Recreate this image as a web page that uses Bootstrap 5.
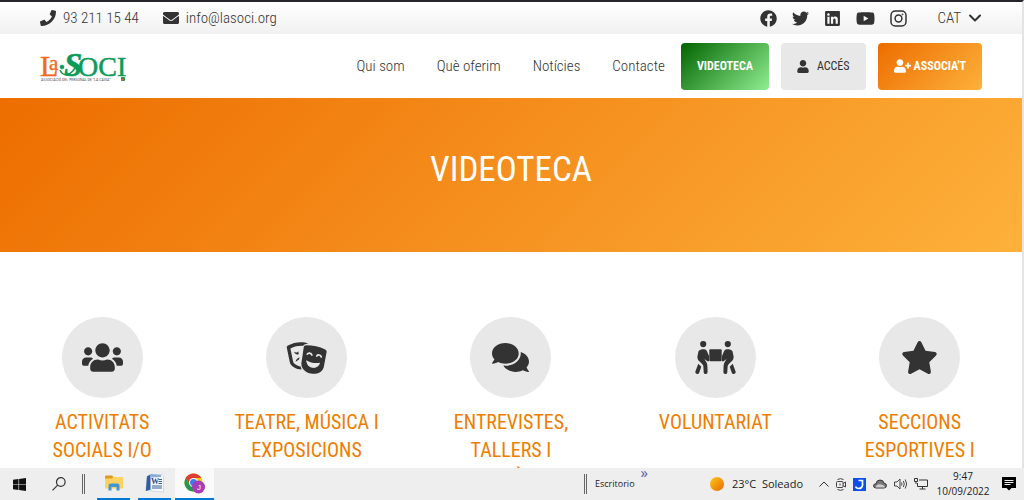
<!DOCTYPE html>
<html lang="ca">
<head>
<meta charset="utf-8">
<meta name="viewport" content="width=device-width, initial-scale=1">
<title>Videoteca - LaSoci</title>
<link href="https://cdn.jsdelivr.net/npm/bootstrap@5.3.0/dist/css/bootstrap.min.css" rel="stylesheet">
<style>
  body { font-family: "Liberation Sans Narrow", "Roboto Condensed", "Liberation Sans", sans-serif; color: #333; background: #fff; }
  svg { display: block; fill: currentColor; flex: none; }
  a { color: inherit; text-decoration: none; }
  .site { border-top: 2px solid #25262b; border-right: 2px solid #e4e4e6; min-height: 0; }
  .site-pad { padding-left: 40px; padding-right: 40px; }
  .topbar { height: 32px; background: linear-gradient(#fff, #f1f1f1); }
  .mainbar { height: 64px; }
  .topbar, .mainbar .nav-link { font-size: 15px; line-height: 24px; font-weight: 300; color: #333; }
  .contact { gap: 7px; }
  .social { gap: 15px; margin-right: 30px; }
  .mainbar .nav-link { padding: 0 16px; }
  .mainbar .btn { height: 47px; border: 0; border-radius: 4px; padding: 0 16px; font-size: 12px; color: #333; gap: 8px; }
  .mainbar .btn-video { background: linear-gradient(135deg, #006400, #90ee90); color: #fff; font-weight: bold; }
  .mainbar .btn-access { background: #e8e8e8; }
  .mainbar .btn-join, .hero { background: linear-gradient(135deg, #ed6d00, #fdb13b); color: #fff; }
  .mainbar .btn-join { font-weight: bold; gap: 3px; }
  .hero { height: 154px; padding-bottom: 10px; }
  .hero h1 { font-size: 35px; line-height: 42px; font-weight: 400; }
  .topics { padding-top: 65px; }
  .topics a { color: #f07d00; }
  .topic-icon { width: 81px; height: 81px; background: #e8e8e8; color: #333; margin-bottom: 10px; }
  .topics h2 { font-size: 20px; line-height: 28px; font-weight: 400; padding: 0 28px; }
  .taskbar { height: 32px; background: #eee; font-family: "Open Sans", "Noto Sans", sans-serif; font-size: 11px; line-height: 14px; color: #222; }
  .taskbar button { border: 0; background: none; padding: 0; height: 32px; color: #111; }
  .slot { width: 39px; }
  .app { border-bottom: 2px solid #0078d7 !important; width: 33px; margin: 0 4px; }
  .taskbar .app-current { width: 39px; margin: 0; background: #fafafa; }
  .bars { width: 3px; height: 20px; border: solid #666; border-width: 0 1px; }
  .desk { font-size: 9px; }
  .more { font-size: 15px; color: #5a5aa8; align-self: flex-start; margin: -3px 62px 0 6px; }
  .tray { gap: 7px; }
  .clock { font-size: 10px; line-height: 15px; width: 54px; }
  .notices { margin: 0 8px 0 12px; }
</style>
</head>
<body class="vh-100 d-flex flex-column overflow-hidden">
<div class="site flex-fill overflow-hidden">
  <div class="topbar site-pad d-flex align-items-center">
    <a href="tel:932111544" class="contact d-flex align-items-center">
      <svg width="16" height="16" viewBox="0 0 512 512"><path d="M493.4 24.6l-104-24c-11.3-2.6-22.9 3.3-27.5 13.9l-48 112c-4.2 9.8-1.4 21.3 6.9 28l60.6 49.6c-36 76.7-98.9 140.5-177.2 177.2l-49.6-60.6c-6.8-8.3-18.2-11.1-28-6.9l-112 48C3.9 366.5-2 378.1.6 389.4l24 104C27.1 504.2 36.7 512 48 512c256.1 0 464-207.5 464-464 0-11.2-7.7-20.9-18.6-23.4z"/></svg>93 211 15 44</a>
    <a href="mailto:info@lasoci.org" class="contact d-flex align-items-center ms-4">
      <svg width="16" height="16" viewBox="0 0 512 512"><path d="M502.3 190.8c3.9-3.1 9.7-.2 9.7 4.7V400c0 26.5-21.5 48-48 48H48c-26.5 0-48-21.5-48-48V195.6c0-5 5.7-7.8 9.7-4.7 22.4 17.4 52.1 39.5 154.1 113.6 21.1 15.4 56.7 47.8 92.2 47.6 35.7.3 72-32.8 92.3-47.6 102-74.1 131.6-96.3 154-113.7zM256 320c23.2.4 56.6-29.2 73.4-41.4 132.7-96.3 142.8-104.7 173.4-128.7 5.8-4.5 9.2-11.5 9.2-18.9v-19c0-26.5-21.5-48-48-48H48c-26.5 0-48 21.5-48 48v19c0 7.4 3.4 14.3 9.2 18.9 30.6 23.9 40.7 32.4 173.4 128.7 16.8 12.2 50.2 41.8 73.4 41.4z"/></svg>info@lasoci.org</a>
    <div class="social d-flex align-items-center ms-auto">
      <a href="#" aria-label="Facebook"><svg width="17" height="17" viewBox="0 0 512 512"><path d="M504 256C504 119 393 8 256 8S8 119 8 256c0 123.78 90.69 226.38 209.25 245V327.69h-63V256h63v-54.64c0-62.15 37-96.48 93.67-96.48 27.14 0 55.52 4.84 55.52 4.84v61h-31.28c-30.8 0-40.41 19.12-40.41 38.73V256h68.78l-11 71.69h-57.78V501C413.31 482.38 504 379.78 504 256z"/></svg></a>
      <a href="#" aria-label="Twitter"><svg width="17" height="17" viewBox="0 0 512 512"><path d="M459.37 151.716c.325 4.548.325 9.097.325 13.645 0 138.72-105.583 298.558-298.558 298.558-59.452 0-114.68-17.219-161.137-47.106 8.447.974 16.568 1.299 25.34 1.299 49.055 0 94.213-16.568 130.274-44.832-46.132-.975-84.792-31.188-98.112-72.772 6.498.974 12.995 1.624 19.818 1.624 9.421 0 18.843-1.3 27.614-3.573-48.081-9.747-84.143-51.98-84.143-102.985v-1.299c13.969 7.797 30.214 12.67 47.431 13.319-28.264-18.843-46.781-51.005-46.781-87.391 0-19.492 5.197-37.36 14.294-52.954 51.655 63.675 129.3 105.258 216.365 109.807-1.624-7.797-2.599-15.918-2.599-24.04 0-57.828 46.782-104.934 104.934-104.934 30.213 0 57.502 12.67 76.67 33.137 23.715-4.548 46.456-13.32 66.599-25.34-7.798 24.366-24.366 44.833-46.132 57.827 21.117-2.273 41.584-8.122 60.426-16.243-14.292 20.791-32.161 39.308-52.628 54.253z"/></svg></a>
      <a href="#" aria-label="LinkedIn"><svg width="17" height="17" viewBox="-32 0 512 512"><path d="M416 32H31.9C14.3 32 0 46.5 0 64.3v383.4C0 465.5 14.3 480 31.9 480H416c17.6 0 32-14.5 32-32.3V64.3c0-17.8-14.4-32.3-32-32.3zM135.4 416H69V202.2h66.5V416zm-33.2-243c-21.3 0-38.5-17.3-38.5-38.5S80.9 96 102.2 96c21.2 0 38.5 17.3 38.5 38.5 0 21.3-17.2 38.5-38.5 38.5zm282.1 243h-66.4V312c0-24.8-.5-56.7-34.5-56.7-34.6 0-39.9 27-39.9 54.9V416h-66.4V202.2h63.7v29.2h.9c8.9-16.8 30.6-34.5 62.9-34.5 67.2 0 79.7 44.3 79.7 101.9V416z"/></svg></a>
      <a href="#" aria-label="YouTube"><svg width="19" height="17" viewBox="0 0 576 512"><path d="M549.655 124.083c-6.281-23.65-24.787-42.276-48.284-48.597C458.781 64 288 64 288 64S117.22 64 74.629 75.486c-23.497 6.322-42.003 24.947-48.284 48.597-11.412 42.867-11.412 132.305-11.412 132.305s0 89.438 11.412 132.305c6.281 23.65 24.787 41.5 48.284 47.821C117.22 448 288 448 288 448s170.78 0 213.371-11.486c23.497-6.321 42.003-24.171 48.284-47.821 11.412-42.867 11.412-132.305 11.412-132.305s0-89.438-11.412-132.305zm-317.51 213.508V175.185l142.739 81.205-142.739 81.201z"/></svg></a>
      <a href="#" aria-label="Instagram"><svg width="17" height="17" viewBox="0 0 17 17" stroke="currentColor" stroke-width="1.5" style="fill:none"><rect x="1" y="1" width="15" height="15" rx="4.3"/><circle cx="8.5" cy="8.5" r="3.4"/><circle cx="12.6" cy="4.4" r=".5" stroke-width="1"/></svg></a>
    </div>
    <a href="#" class="contact d-flex align-items-center">CAT
      <svg width="14" height="14" viewBox="0 0 14 14" style="fill:none" stroke="currentColor" stroke-width="2" stroke-linecap="round" stroke-linejoin="round"><path d="M2 4.5l5 5 5-5"/></svg></a>
  </div>

  <nav class="mainbar site-pad d-flex align-items-center">
    <a href="#" class="me-auto" aria-label="LaSoci">
      <svg width="86" height="34" viewBox="0 0 86 34" font-family="Liberation Serif, serif">
        <g fill="#f26a21" stroke="#f26a21" stroke-width=".4"><text x="0" y="27" font-size="30">L</text><text x="9" y="21" font-size="21">a</text></g>
        <g fill="#0d9b59" stroke="#0d9b59" stroke-width=".5"><text x="24" y="27" font-size="33" font-style="italic" font-weight="bold">S</text><text x="38" y="27" font-size="28">OCI</text><circle cx="22" cy="18" r="2"/></g>
        <path d="M20 21c3 7 10 6 15-2" fill="none" stroke="#0d9b59" stroke-width="1.5"/>
        <text x="1" y="32" font-family="Liberation Sans Narrow, Roboto Condensed, sans-serif" font-size="4" fill="#555">ASSOCIACIÓ DEL PERSONAL DE “LA CAIXA”</text>
        <rect x="81" y="28" width="4" height="4" rx="1" fill="#0d9b59"/><circle cx="82.500" cy="30.500" r="1" fill="#f26a21"/>
      </svg></a>
    <a class="nav-link" href="#">Qui som</a>
    <a class="nav-link" href="#">Què oferim</a>
    <a class="nav-link" href="#">Notícies</a>
    <a class="nav-link" href="#">Contacte</a>
    <div class="d-flex" style="gap:12px">
      <button type="button" class="btn btn-video">VIDEOTECA</button>
      <button type="button" class="btn btn-access d-flex align-items-center"><svg width="12" height="13" viewBox="0 0 448 512"><path d="M224 256c70.7 0 128-57.3 128-128S294.7 0 224 0 96 57.3 96 128s57.3 128 128 128zm89.6 32h-16.7c-22.2 10.2-46.9 16-72.9 16s-50.6-5.8-72.9-16h-16.7C60.2 288 0 348.2 0 422.4V464c0 26.5 21.5 48 48 48h352c26.5 0 48-21.5 48-48v-41.6c0-74.2-60.2-134.4-134.4-134.4z"/></svg>ACCÉS</button>
      <button type="button" class="btn btn-join d-flex align-items-center"><svg width="17" height="14" viewBox="0 0 640 512"><path d="M224 256c70.7 0 128-57.3 128-128S294.7 0 224 0 96 57.3 96 128s57.3 128 128 128zm89.6 32h-16.7c-22.2 10.2-46.9 16-72.9 16s-50.6-5.8-72.9-16h-16.7C60.2 288 0 348.2 0 422.4V464c0 26.5 21.5 48 48 48h352c26.5 0 48-21.5 48-48v-41.6c0-74.2-60.2-134.4-134.4-134.4z"/><path d="M624 208h-64v-64c0-8.8-7.2-16-16-16h-32c-8.8 0-16 7.2-16 16v64h-64c-8.8 0-16 7.2-16 16v32c0 8.8 7.2 16 16 16h64v64c0 8.8 7.2 16 16 16h32c8.8 0 16-7.2 16-16v-64h64c8.8 0 16-7.2 16-16v-32c0-8.8-7.2-16-16-16z"/></svg>ASSOCIA'T</button>
    </div>
  </nav>

  <header class="hero d-flex align-items-center justify-content-center"><h1 class="m-0">VIDEOTECA</h1></header>

  <main class="topics row row-cols-5 g-0 text-center">
    <a href="#" class="col">
      <div class="topic-icon rounded-circle d-flex align-items-center justify-content-center mx-auto"><svg width="41" height="33" viewBox="0 0 640 512"><path d="M96 224c35.3 0 64-28.7 64-64s-28.7-64-64-64-64 28.7-64 64 28.7 64 64 64zm448 0c35.3 0 64-28.7 64-64s-28.7-64-64-64-64 28.7-64 64 28.7 64 64 64zm32 32h-64c-17.6 0-33.5 7.1-45.1 18.6 40.3 22.1 68.9 62 75.1 109.4h66c17.7 0 32-14.3 32-32v-32c0-35.3-28.7-64-64-64zm-256 0c61.9 0 112-50.1 112-112S381.9 32 320 32 208 82.1 208 144s50.1 112 112 112zm76.8 32h-8.3c-20.8 10-43.9 16-68.5 16s-47.6-6-68.5-16h-8.3C179.6 288 128 339.6 128 403.2V432c0 26.5 21.5 48 48 48h288c26.5 0 48-21.5 48-48v-28.8c0-63.6-51.6-115.2-115.2-115.2zm-223.7-13.4C161.5 263.1 145.6 256 128 256H64c-35.3 0-64 28.7-64 64v32c0 17.7 14.3 32 32 32h65.9c6.3-47.4 34.9-87.3 75.2-109.4z"/></svg></div>
      <h2>ACTIVITATS SOCIALS I/O</h2></a>
    <a href="#" class="col">
      <div class="topic-icon rounded-circle d-flex align-items-center justify-content-center mx-auto"><svg width="41" height="33" viewBox="0 0 41 33">
        <path d="M22.5 2.600C17 .2 8.500.7 1.900 4.500c-.9.5-1.300 1.300-1.100 2.300l3 14.500c.8 4 6.300 7.200 11.800 7.300l-1-3.200c-3.500-.5-7-2.600-7.500-4.900L4.400 7.400c4.300-2 8.200-2.700 12.600-2.500 1.200-1.500 3-2.200 5.500-2.300z"/>
        <path d="M8 10.800c2 1 3.600.8 4.400-.6l.3 3c-1.800.8-3.700 0-4.700-2.400zM9.600 20.800c.3-2.300 1.800-3.800 4-4.600l-.6 2.300z"/>
        <path d="M17.700 6.400c.2-1.300 1.200-2.100 2.500-2.100 6.700.1 13.200 1.300 19 4.100 1.100.5 1.600 1.500 1.400 2.700l-2.800 14.800c-1.200 5.200-7.200 7.700-12.700 6.700-5.400-1-10-4.700-9.700-10.400z"/>
        <g fill="none" stroke="#e8e8e8" stroke-width="1.700" stroke-linecap="round"><path d="M21.300 13.200c.9-1.700 3.700-1.500 4.600.8M30.800 15c1-1.700 3.800-1.300 4.500.9"/></g>
        <path d="M20.200 19.200c4.500 2.700 9 3.400 13.900 2.600-1 3.800-4.100 5.500-7.500 5-3.700-.6-6.200-3.400-6.400-7.600z" fill="#e8e8e8"/></svg></div>
      <h2>TEATRE, MÚSICA I EXPOSICIONS</h2></a>
    <a href="#" class="col">
      <div class="topic-icon rounded-circle d-flex align-items-center justify-content-center mx-auto"><svg width="37" height="33" viewBox="0 0 576 512"><path d="M416 192c0-88.4-93.1-160-208-160S0 103.6 0 192c0 34.3 14.1 65.9 38 92-13.4 30.2-35.5 54.2-35.8 54.5-2.2 2.3-2.8 5.7-1.5 8.7S4.8 352 8 352c36.6 0 66.9-12.3 88.7-25 32.2 15.7 70.3 25 111.3 25 114.9 0 208-71.6 208-160zm122 220c23.900-26 38-57.700 38-92 0-66.900-53.500-124.200-129.300-148.100.9 6.600 1.300 13.300 1.300 20.100 0 105.900-107.700 192-240 192-10.800 0-21.300-.8-31.700-1.900C207.800 439.600 281.800 480 368 480c41 0 79.100-9.200 111.300-25 21.800 12.700 52.100 25 88.700 25 3.200 0 6.100-1.900 7.300-4.800 1.300-2.900.7-6.300-1.500-8.700-.3-.3-22.400-24.200-35.800-54.500z"/></svg></div>
      <h2>ENTREVISTES, TALLERS I CONFERÈNCIES</h2></a>
    <a href="#" class="col">
      <div class="topic-icon rounded-circle d-flex align-items-center justify-content-center mx-auto"><svg width="41" height="33" viewBox="0 0 41 33">
        <rect x="14.3" y="8.3" width="12.4" height="12" rx="1"/>
        <g id="carrier"><circle cx="8.2" cy="3.1" r="3.1"/>
        <path d="M3.5 10.300C5 8.300 7 8 9.200 8.200c1.600.2 2.400 1 3 2.600l1.800 4.300v5.200h-1.500L9.400 18l1.400 2.300c1.200 1.900 1.500 3 1.600 5l.2 5.700c0 2.600-3.700 2.700-3.900.2l-.3-5.200c0-1.400-.5-2.200-1.500-3.200l-2.800-2.900C2.700 18.500 2.200 17.300 2.500 15z"/>
        <path d="M3.300 22.700l3 3-2.100 6c-.9 2.200-4.500 1.200-3.800-1.300z"/></g>
        <use href="#carrier" transform="matrix(-1 0 0 1 41 0)"/></svg></div>
      <h2>VOLUNTARIAT</h2></a>
    <a href="#" class="col">
      <div class="topic-icon rounded-circle d-flex align-items-center justify-content-center mx-auto"><svg width="37" height="33" viewBox="0 0 576 512"><path d="M259.3 17.800L194 150.200 47.900 171.500c-26.200 3.800-36.700 36.100-17.700 54.600l105.700 103-25 145.500c-4.500 26.300 23.200 46 46.400 33.700L288 439.600l130.700 68.700c23.200 12.200 50.900-7.400 46.400-33.700l-25-145.500 105.700-103c19-18.500 8.500-50.800-17.700-54.600L382 150.200 316.700 17.800c-11.700-23.600-45.600-23.900-57.400 0z"/></svg></div>
      <h2>SECCIONS ESPORTIVES I CULTURALS</h2></a>
  </main>
</div>

<footer class="taskbar d-flex align-items-center flex-shrink-0">
  <button type="button" class="slot d-flex align-items-center justify-content-center" aria-label="Inicio"><svg width="13" height="13" viewBox="0 0 13 13"><path d="M0 1.800L5.500 1v5.200H0zM6.100.9L13 0v6.200H6.100zM0 6.800h5.500V12L0 11.200zM6.100 6.800H13V13l-6.900-.9z"/></svg></button>
  <button type="button" class="slot d-flex align-items-center justify-content-center" aria-label="Buscar"><svg width="14" height="14" viewBox="0 0 14 14" style="fill:none" stroke="#333" stroke-width="1.200"><circle cx="8.800" cy="5" r="4.300"/><path d="M5.700 8.200L.5 13.400"/></svg></button>
  <span class="bars ms-1 me-2"></span>
  <button type="button" class="app ms-1 d-flex align-items-center justify-content-center" aria-label="Explorador"><svg width="18" height="16" viewBox="0 0 18 16"><path d="M0 1.500Q0 .5 1 .5h6L8.500 2v2H0z" fill="#dc9a16"/><path d="M8 2h9q1 0 1 1v10.500H0v-10h7z" fill="#fdd262"/><path d="M3.500 15.500v-5q0-2 2-2h7q2 0 2 2v5h-3V12h-5v3.500z" fill="#3f97d8"/></svg></button>
  <button type="button" class="app d-flex align-items-center justify-content-center" aria-label="Word"><svg width="19" height="19" viewBox="0 0 19 19"><path d="M5 .5h12l1.500 1.500v16L6 17z" fill="#f8fafd" stroke="#b8c8de" stroke-width=".6"/><path d="M2 2l4-2 10 1v2L6 3.500V16L.5 17z" fill="#8bacd6"/><path d="M2 2.500L5 1v14.500L1 17z" fill="#315d9f"/><text x="6" y="10" font-family="Liberation Serif, serif" font-weight="bold" font-size="8" fill="#244b8c">W</text><path d="M13.500 5.500H17M13.500 7.500H17M13.500 9.500H17M7 12h10M7 14h10" stroke="#315d9f"/></svg></button>
  <button type="button" class="app app-current d-flex align-items-center justify-content-center" aria-label="Chrome"><svg width="21" height="21" viewBox="0 0 21 21"><circle cx="9.500" cy="9.500" r="9" fill="#fbc116"/><path d="M1.700 5A9 9 0 0 1 17.300 5H9.500L5.600 11.800z" fill="#df3b2f"/><path d="M1.700 5A9 9 0 0 0 9.500 18.500L13.400 11.700H5.600z" fill="#229a4c"/><circle cx="9.500" cy="9.500" r="4.500" fill="#fff"/><circle cx="9.500" cy="9.500" r="3.500" fill="#3b7ded"/><circle cx="14.500" cy="14" r="6.500" fill="#a83cb5"/><text x="13" y="17" font-family="Liberation Sans, sans-serif" font-size="8" fill="#fff">J</text></svg></button>

  <span class="bars ms-auto me-2"></span><span class="desk">Escritorio</span><span class="more">»</span>
  <svg width="14" height="14" viewBox="0 0 14 14"><defs><linearGradient id="sun" x1="0" y1="0" x2="1" y2="1"><stop stop-color="#ffc91a"/><stop offset="1" stop-color="#e96805"/></linearGradient></defs><circle cx="7" cy="7" r="7" fill="url(#sun)"/></svg>
  <span class="ms-2">23°C&nbsp; Soleado</span>
  <div class="tray d-flex align-items-center ms-3">
    <svg width="10" height="6" viewBox="0 0 10 6" style="fill:none" stroke="#333"><path d="M.5 5.500L5 1l4.500 4.500"/></svg>
    <svg width="10" height="13" viewBox="0 0 10 13" style="fill:none" stroke="#444"><rect x=".5" y="3.500" width="6.500" height="6" rx="1"/><path d="M7 5.500L9.500 4v5L7 7.500M1.500 1.500Q4.500-.2 7.500 1.500M1.500 11.500q3 1.700 6 0M4 5.500v2"/></svg>
    <svg width="13" height="13" viewBox="0 0 13 13"><rect width="13" height="13" fill="#0b4fe8"/><path d="M5.500 2.500h4v5Q9 10.500 5.500 10.500 3 10.300 2.500 8.500" fill="none" stroke="#fff" stroke-width="1.700"/></svg>
    <svg width="14" height="10" viewBox="0 0 14 10"><path d="M3 9Q.5 8.800.5 6.800T3 4.800Q3.500 1 7 1t4 3.200q2.500.2 2.500 2.400T11 9z" fill="#777" stroke="#333"/><path d="M2.500 8.500Q4 4.500 8 5.500t4 3z" fill="#ccc"/></svg>
    <svg width="13" height="12" viewBox="0 0 13 12" style="fill:none" stroke="#444"><path d="M.5 4H3l3-3v10L3 8H.5zM7.500 4.500q1 1.500 0 3M9.300 3q2 3 0 6M11.200 1.500q3 4.500 0 9"/></svg>
    <svg width="14" height="12" viewBox="0 0 14 12" style="fill:none" stroke="#333"><path d="M5 2h8.500v6.500H3.500V5M8.500 8.500V11M5.500 11h6M.5.500h3v3h-3zM2 3.500V6"/></svg>
  </div>
  <div class="clock text-center ms-2"><div>9:47</div><div>10/09/2022</div></div>
  <button type="button" class="notices" aria-label="Notificaciones"><svg width="14" height="14" viewBox="0 0 14 14"><path d="M0 0h14v11H9.500L7 13.500 4.500 11H0z" fill="#000"/><path d="M2.500 3.500h9M2.500 5.500h9M2.500 7.500h6" stroke="#eee"/></svg></button>
</footer>
<script src="https://cdn.jsdelivr.net/npm/bootstrap@5.3.0/dist/js/bootstrap.bundle.min.js"></script>
</body>
</html>
